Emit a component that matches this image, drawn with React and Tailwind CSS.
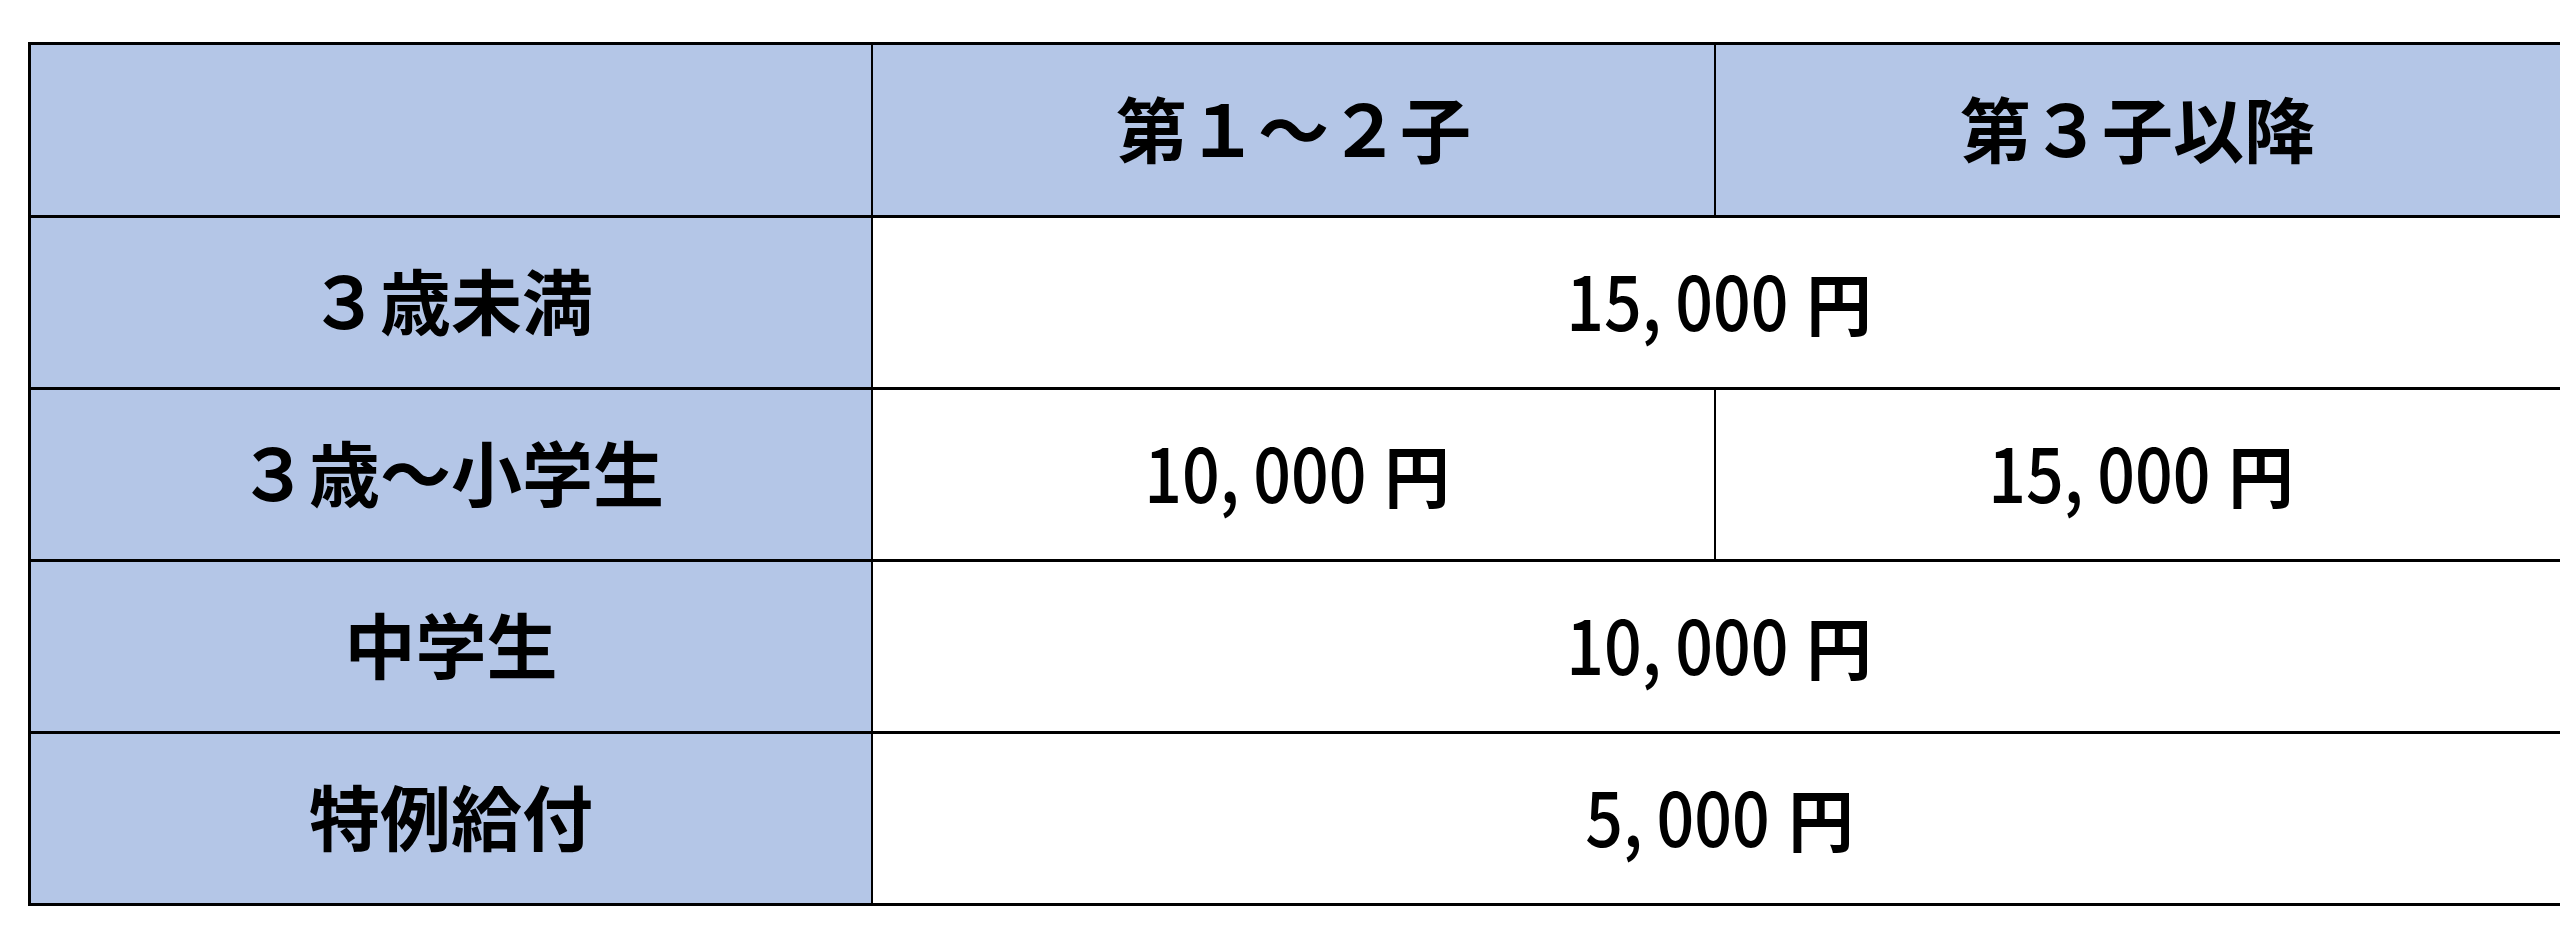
const rows = [
  { label: '３歳未満', values: ['15,000'] },
  { label: '３歳～小学生', values: ['10,000', '15,000'] },
  { label: '中学生', values: ['10,000'] },
  { label: '特例給付', values: ['5,000'] },
]

const jp = "font-['Noto_Sans_CJK_JP',sans-serif]"

// narrow, tall digits like the original spreadsheet font
function Amount({ value }) {
  const [head, tail] = value.split(',')
  return (
    <span className={`inline-block scale-x-[0.86] text-[77px] leading-none font-medium ${jp}`}>
      {head}
      <span className="mr-[16px]">,</span>
      {tail}
      <span className="inline-block ml-[21px] text-[68px] font-bold scale-x-[1.12] origin-left">円</span>
    </span>
  )
}

export default function App() {
  return (
    <div className="w-screen h-[946px] bg-white overflow-hidden pt-[42px] pl-[28px]">
      <div className="w-[2560px] border-t-[3px] border-l-[3px] border-black text-black">
        <div className="flex h-[173px] border-b-[3px] border-black bg-[#b4c6e7]">
          <div className="w-[842px] shrink-0 border-r-2 border-black" />
          <div className={`w-[843px] shrink-0 border-r-2 border-black flex items-center justify-center pb-[8px] text-[71px] leading-none font-bold ${jp}`}>
            第１～２子
          </div>
          <div className={`w-[843px] shrink-0 flex items-center justify-center pb-[8px] text-[71px] leading-none font-bold ${jp}`}>
            第３子以降
          </div>
        </div>
        {rows.map((row) => (
          <div key={row.label} className="flex h-[172px] border-b-[3px] border-black">
            <div className={`w-[842px] shrink-0 border-r-2 border-black bg-[#b4c6e7] flex items-center justify-center pb-[8px] text-[71px] leading-none font-bold ${jp}`}>
              {row.label}
            </div>
            {row.values.length === 1 ? (
              <div className="w-[1686px] shrink-0 flex items-center justify-center pb-[10px]">
                <Amount value={row.values[0]} />
              </div>
            ) : (
              <>
                <div className="w-[843px] shrink-0 border-r-2 border-black flex items-center justify-center pb-[10px]">
                  <Amount value={row.values[0]} />
                </div>
                <div className="w-[843px] shrink-0 flex items-center justify-center pb-[10px]">
                  <Amount value={row.values[1]} />
                </div>
              </>
            )}
          </div>
        ))}
      </div>
    </div>
  )
}
